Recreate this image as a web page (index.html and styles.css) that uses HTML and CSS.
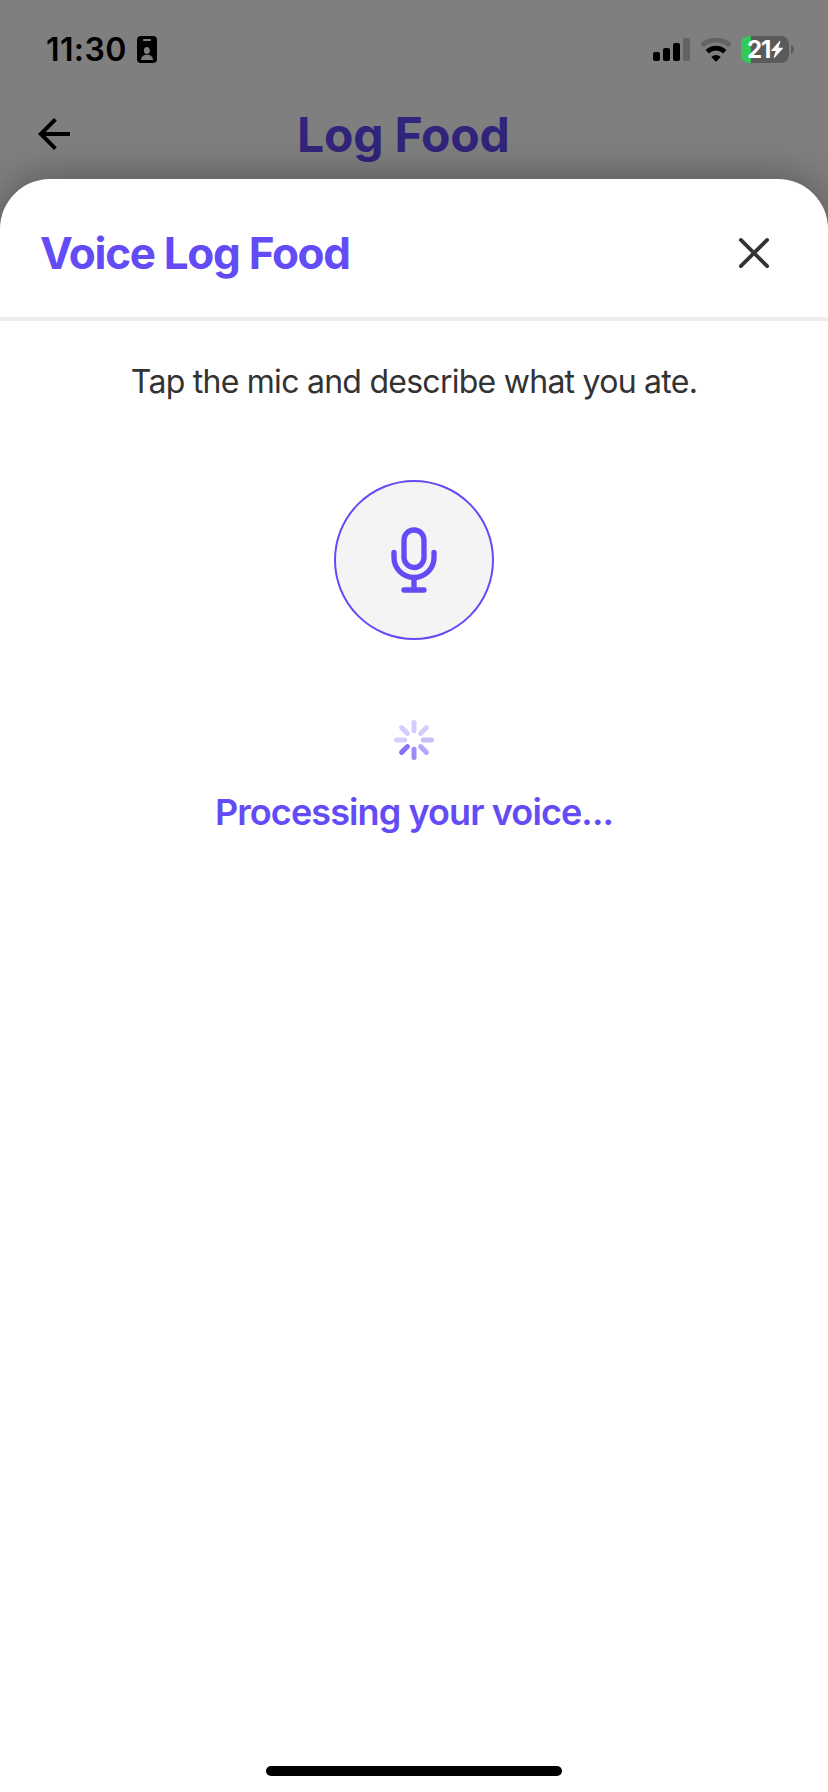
FILE: index.html
```html
<!DOCTYPE html>
<html lang="en">
<head>
<meta charset="utf-8">
<title>Voice Log Food</title>
<link rel="stylesheet" href="styles.css">
</head>
<body>
<div class="screen">
  <div class="status-bar">
    <span class="time">11:30</span>
    <svg class="id-card" width="20" height="27" viewBox="0 0 20 27">
      <rect width="20" height="27" rx="4" fill="#000"/>
      <rect x="6" y="3" width="8" height="2" rx="0.8" fill="#7d7d7d"/>
      <ellipse cx="9.9" cy="14.4" rx="3" ry="3.5" fill="#7d7d7d"/>
      <path d="M4 24C4 20.600 6.500 18.700 10 18.700s6 1.900 6 5.300z" fill="#7d7d7d"/>
    </svg>
    <svg class="signal" width="37" height="23" viewBox="0 0 37 23">
      <rect x="0" y="14" width="7" height="9" rx="2"/>
      <rect x="10" y="10" width="7" height="13" rx="2"/>
      <rect x="20" y="5" width="7" height="18" rx="2"/>
      <rect x="30" y="0" width="7" height="23" rx="2" fill="#636363"/>
    </svg>
    <svg class="wifi" width="32" height="24" viewBox="0 0 32 24">
      <path d="M2 7.500a20.300 20.300 0 0 1 28 0" fill="none" stroke="#636363" stroke-width="5"/>
      <path d="M7.200 13.800a12.600 12.600 0 0 1 17.600 0" fill="none" stroke="#000" stroke-width="4.800"/>
      <path d="M11.300 18.900a6.700 6.700 0 0 1 9.400 0L16 23.800z" fill="#000"/>
    </svg>
    <div class="battery">
      <span class="battery-level">21</span>
      <svg width="12" height="17" viewBox="0 0 12 17"><path d="M8.600 0L0.300 9.200c-.4.500-.2.900.4.900h4L2.700 16.300c-.2.700.4.900.8.400L11.700 7.700c.4-.5.200-.9-.4-.9H7.400L9.400.6C9.600 0 9-.4 8.600 0z" fill="#fff"/></svg>
    </div>
    <svg class="battery-tip" width="3" height="9" viewBox="0 0 3 9"><path d="M0 0c4 1.500 4 7.500 0 9z" fill="#5c5c5c"/></svg>
  </div>
  <header class="page-header">
    <svg class="back" width="48" height="48" viewBox="0 0 24 24"><path d="M20 11H7.830l5.590-5.590L12 4l-8 8 8 8 1.410-1.410L7.830 13H20z"/></svg>
    <h1 class="page-title">Log Food</h1>
  </header>
  <main class="sheet">
    <div class="sheet-header">
      <h2 class="sheet-title">Voice Log Food</h2>
      <svg class="close" width="60" height="60" viewBox="0 0 512 512"><path d="M368 368L144 144M368 144L144 368"/></svg>
    </div>
    <div class="sheet-body">
      <p class="hint">Tap the mic and describe what you ate.</p>
      <div class="mic-button">
        <svg width="80" height="80" viewBox="0 0 512 512">
          <path d="M192 448h128M384 208v32c0 70.400-57.600 128-128 128s-128-57.600-128-128v-32M256 368v80"/>
          <path d="M256 64a63.680 63.680 0 0 0-64 64v111c0 35.200 29 65 64 65s64-29 64-65V128c0-36-28-64-64-64z"/>
        </svg>
      </div>
      <svg class="spinner" width="40" height="40" viewBox="-20 -20 40 40">
        <path d="M0-9.300V-17.500" stroke="#d6cdfd"/>
        <path d="M0-9.300V-17.500" stroke="#d6cdfd" transform="rotate(45)"/>
        <path d="M0-9.300V-17.500" stroke="#c9befc" transform="rotate(90)"/>
        <path d="M0-9.300V-17.500" stroke="#b5a7fb" transform="rotate(135)"/>
        <path d="M0-9.300V-17.500" stroke="#9f8cf9" transform="rotate(180)"/>
        <path d="M0-9.300V-17.500" stroke="#8870f8" transform="rotate(225)"/>
        <path d="M0-9.300V-17.500" stroke="#d6cdfd" transform="rotate(270)"/>
        <path d="M0-9.300V-17.500" stroke="#d6cdfd" transform="rotate(315)"/>
      </svg>
      <p class="processing">Processing your voice...</p>
    </div>
    <div class="home-indicator"></div>
  </main>
</div>
</body>
</html>
```
FILE: styles.css
```css
* { box-sizing: border-box; }
body {
  margin: 0;
  font-family: Inter, "Liberation Sans", sans-serif;
}
h1, h2, p { margin: 0; white-space: nowrap; }
svg { display: block; flex: none; }
.screen {
  width: 828px;
  height: 1792px;
  display: flex;
  flex-direction: column;
  overflow: hidden;
  background: #7f7f7f;
}
.status-bar {
  display: flex;
  align-items: center;
  height: 99px;
  padding: 0 34px 0 46px;
}
.time {
  width: 91px;
  font-size: 32px;
  font-weight: 600;
  line-height: 40px;
  letter-spacing: 0.4px;
}
.signal { margin-left: auto; }
.wifi { margin-left: 10px; }
.battery {
  display: flex;
  align-items: center;
  width: 48px;
  height: 27px;
  margin-left: 9px;
  padding-left: 6px;
  gap: 1px;
  border-radius: 8px;
  background: linear-gradient(to right, #34c759 10px, #5a5a5a 10px);
}
.battery-level {
  width: 23px;
  color: #fff;
  font-size: 24px;
  font-weight: 700;
  line-height: 27px;
  letter-spacing: -1px;
}
.battery-tip { margin-left: 2px; }
.page-header {
  display: flex;
  align-items: center;
  height: 80px;
  padding: 0 30px 10px;
}
.back { fill: #000; }
.page-title {
  margin-left: 219px;
  padding-top: 2px;
  color: #31247b;
  font-size: 48px;
  font-weight: 700;
  line-height: 60px;
  letter-spacing: -0.2px;
}
.sheet {
  display: flex;
  flex: 1;
  flex-direction: column;
  align-items: center;
  border-radius: 50px 50px 0 0;
  background: #fff;
  box-shadow: 0 0 40px rgba(0, 0, 0, 0.35);
}
.sheet-header {
  display: flex;
  align-items: center;
  justify-content: space-between;
  width: 100%;
  height: 142px;
  padding: 10px 44px 0 40px;
  border-bottom: 4px solid #eee;
}
.sheet-title {
  color: #634bf6;
  font-size: 44px;
  font-weight: 700;
  line-height: 60px;
  letter-spacing: -1.3px;
}
.close {
  fill: none;
  stroke: #333;
  stroke-width: 32;
  stroke-linecap: round;
}
.sheet-body {
  display: flex;
  flex: 1;
  flex-direction: column;
  align-items: center;
  padding-top: 41px;
}
.hint {
  color: #333;
  font-size: 32px;
  line-height: 40px;
  letter-spacing: -0.74px;
}
.mic-button {
  display: flex;
  align-items: center;
  justify-content: center;
  width: 160px;
  height: 160px;
  margin-top: 78px;
  border: 2px solid #634bf6;
  border-radius: 50%;
  background: #f4f4f4;
}
.mic-button svg {
  fill: none;
  stroke: #634bf6;
  stroke-width: 34;
  stroke-linecap: round;
  stroke-linejoin: round;
}
.spinner {
  margin-top: 80px;
  stroke-width: 5;
  stroke-linecap: round;
}
.processing {
  margin-top: 32px;
  color: #634bf6;
  font-size: 36px;
  font-weight: 600;
  line-height: 40px;
  letter-spacing: -0.9px;
}
.home-indicator {
  width: 296px;
  height: 10px;
  margin-bottom: 16px;
  border-radius: 5px;
  background: #000;
}
```
